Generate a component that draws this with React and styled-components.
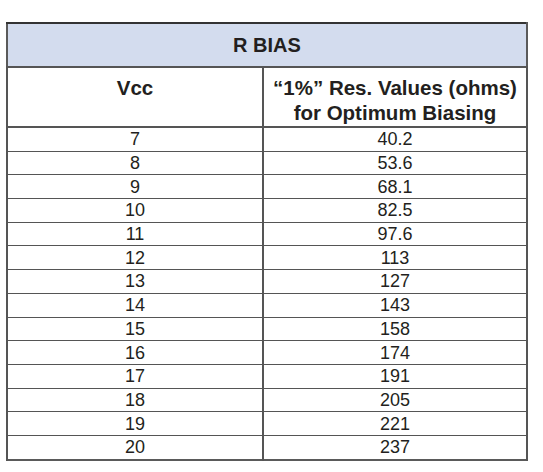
import React from "react";
import styled, { createGlobalStyle } from "styled-components";

const rows = [
  [7, "40.2"],
  [8, "53.6"],
  [9, "68.1"],
  [10, "82.5"],
  [11, "97.6"],
  [12, "113"],
  [13, "127"],
  [14, "143"],
  [15, "158"],
  [16, "174"],
  [17, "191"],
  [18, "205"],
  [19, "221"],
  [20, "237"],
];

const GlobalStyle = createGlobalStyle`
  body {
    margin: 0;
    background: #fff;
    font-family: "Liberation Sans", Arial, sans-serif;
  }
`;

const Page = styled.div`
  padding: 22px 0 0 6px;
`;

const Table = styled.table`
  width: 522px;
  border-collapse: collapse;
  border: 2px solid #5a5a5a;
  border-top-color: #333;
  table-layout: fixed;
  color: #231f20;
`;

const TitleCell = styled.th`
  height: 42px;
  background: #d3dcee;
  font-size: 20px;
  font-weight: bold;
  text-align: center;
  border-bottom: 2px solid #555;
  padding: 0;
`;

const HeadCell = styled.th`
  height: 51px;
  font-size: 20.5px;
  font-weight: bold;
  line-height: 25px;
  text-align: center;
  vertical-align: top;
  padding: 7px 0 0;
  border: 2px solid #555;
  border-top: none;
`;

const Cell = styled.td`
  height: 22.7px;
  padding: 0;
  font-size: 18px;
  line-height: 20px;
  text-align: center;
  vertical-align: middle;
  border: 2px solid #555;
  border-width: 1.5px 2px;
`;

export default function App() {
  return (
    <Page>
      <GlobalStyle />
      <Table>
        <colgroup>
          <col style={{ width: 256 }} />
          <col />
        </colgroup>
        <thead>
          <tr>
            <TitleCell colSpan={2}>R BIAS</TitleCell>
          </tr>
          <tr>
            <HeadCell>Vcc</HeadCell>
            <HeadCell>
              “1%” Res. Values (ohms)
              <br />
              for Optimum Biasing
            </HeadCell>
          </tr>
        </thead>
        <tbody>
          {rows.map(([v, r]) => (
            <tr key={v}>
              <Cell>{v}</Cell>
              <Cell>{r}</Cell>
            </tr>
          ))}
        </tbody>
      </Table>
    </Page>
  );
}
